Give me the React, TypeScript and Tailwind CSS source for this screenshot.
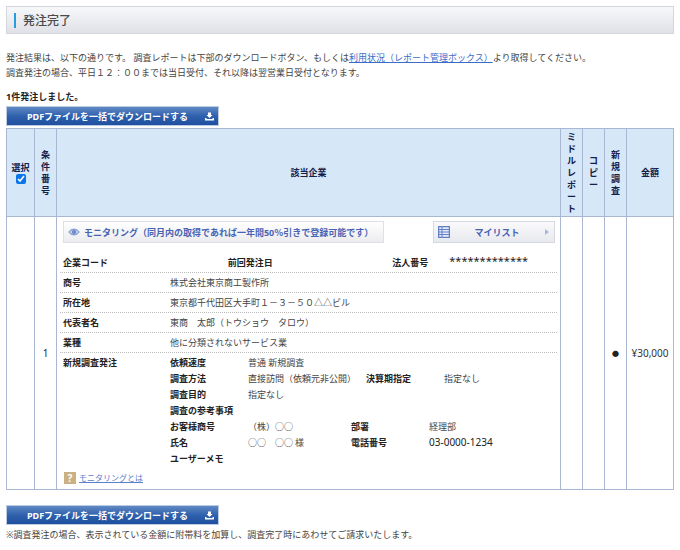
import type { ReactNode } from "react";

const companyRows = [
  { label: "商号", value: "株式会社東京商工製作所" },
  { label: "所在地", value: "東京都千代田区大手町１－３－５０△△ビル" },
  { label: "代表者名", value: "東商　太郎（トウショウ　タロウ）" },
  { label: "業種", value: "他に分類されないサービス業" },
];

function DownloadButton() {
  return (
    <button
      type="button"
      className="flex h-5 w-[213px] items-center justify-between border border-[#bccbe4] bg-linear-to-b from-[#6089c4] via-[#2f61ad] to-[#1f4f9f] pr-1 pl-5 text-[9px] leading-none font-bold text-white"
    >
      <span>PDFファイルを一括でダウンロードする</span>
      <svg width="9" height="9" viewBox="0 0 9 9" fill="currentColor" aria-hidden="true">
        <path d="M3 0.500h3v2.500h1.500L4.500 6 1.500 3H3zM0 6h1.500v1h6V6H9v2.500H0z" />
      </svg>
    </button>
  );
}

function VerticalHead({ text, width }: { text: string; width: string }) {
  return (
    <th className={`${width} border border-[#a9b7d3] p-0`}>
      <div className="mx-auto w-[9px] text-center leading-3">
        {text.split("").map((c, i) => (
          <span key={i} className="block">
            {c}
          </span>
        ))}
      </div>
    </th>
  );
}

function Detail({ label, children }: { label: string; children?: ReactNode }) {
  return (
    <div className="flex">
      <dt className="w-[78px] shrink-0 font-bold whitespace-nowrap text-[#222]">{label}</dt>
      <dd className="flex grow">{children}</dd>
    </div>
  );
}

export default function App() {
  return (
    <main className="px-1.5 py-1.5 font-['Noto_Sans','Noto_Sans_CJK_JP',sans-serif] text-[9px] leading-[15px] text-[#444]">
      <header className="flex h-7 items-center border border-[#d3d6df] bg-linear-to-b from-[#f7f8fa] to-[#dfe1e7] pl-[7px]">
        <span className="h-[15px] w-0.5 bg-[#2a9be0]" />
        <h1 className="pl-[7px] text-[12px] font-medium text-[#4a4a4a]">発注完了</h1>
      </header>

      <p className="mt-4">
        発注結果は、以下の通りです。 調査レポートは下部のダウンロードボタン、もしくは
        <a href="#box" className="text-[#3a6cc8] underline">
          利用状況（レポート管理ボックス）
        </a>
        より取得してください。
        <br />
        調査発注の場合、平日１２：００までは当日受付、それ以降は翌営業日受付となります。
      </p>

      <p className="mt-[9px] mb-0.5 font-bold text-[#222]">1件発注しました。</p>
      <DownloadButton />

      <table className="mt-0.5 w-full table-fixed border-collapse border border-[#a9b7d3]">
        <thead>
          <tr className="h-[88px] bg-[#d6e7f8] text-[#14204a]">
            <th className="w-7 border border-[#a9b7d3] p-0">
              <label className="flex flex-col items-center leading-3">
                選択
                <input type="checkbox" defaultChecked className="size-2.5 accent-[#0a75e8]" />
              </label>
            </th>
            <VerticalHead text="条件番号" width="w-[22px]" />
            <th className="border border-[#a9b7d3] p-0">該当企業</th>
            <VerticalHead text="ミドルレポート" width="w-[22px]" />
            <VerticalHead text="コピー" width="w-[22px]" />
            <VerticalHead text="新規調査" width="w-[22px]" />
            <th className="w-[47px] border border-[#a9b7d3] p-0">金額</th>
          </tr>
        </thead>
        <tbody>
          <tr className="text-center">
            <td className="border border-[#a9b7d3]" />
            <td className="border border-[#a9b7d3] text-[10px] text-[#222]">1</td>
            <td className="border border-[#a9b7d3] px-[3px] pt-1 pb-1 text-left">
              <div className="flex items-start justify-between pr-0.5 pl-[3px]">
                <button
                  type="button"
                  className="flex h-[22px] w-[321px] items-center gap-1 border border-[#e0e0e4] bg-linear-to-b from-white to-[#ececef] px-1 font-bold text-[#4763b4]"
                >
                  <svg width="12" height="10" viewBox="0 0 12 10" fill="#c3d0ec" stroke="#6f8bc8" aria-hidden="true">
                    <path d="M.8 5C3 1.200 9 1.200 11.200 5 9 8.800 3 8.800.8 5z" />
                    <circle cx="6" cy="5" r="1.800" fill="#6f8bc8" />
                  </svg>
                  モニタリング（同月内の取得であれば一年間50％引きで登録可能です）
                </button>
                <button
                  type="button"
                  className="flex h-[22px] w-[122px] items-center justify-between border border-[#d6d9e2] bg-linear-to-b from-[#fafafc] to-[#e8e9ee] px-1 font-bold text-[#4763b4]"
                >
                  <svg width="12" height="12" viewBox="0 0 12 12" fill="#e4eaf7" stroke="#6480c4" aria-hidden="true">
                    <path d="M.5.5h11v11H.5z" strokeWidth="1.500" />
                    <path d="M4 1v10M1 3.500h10M1 6h10M1 8.500h10" />
                  </svg>
                  マイリスト
                  <svg width="6" height="8" viewBox="0 0 6 8" fill="#a9b7dc" aria-hidden="true">
                    <path d="M1 1l4 3-4 3z" />
                  </svg>
                </button>
              </div>

              <dl className="mt-3">
                <div className="flex border-b border-dotted border-[#bbb] pb-0.5 pl-[3px] font-bold text-[#222]">
                  <dt className="w-1/3">企業コード</dt>
                  <dt className="w-1/3">前回発注日</dt>
                  <dt className="w-[57px]">法人番号</dt>
                  <dd className="text-[11px] leading-3 font-normal">*************</dd>
                </div>
                {companyRows.map((row) => (
                  <div key={row.label} className="flex border-b border-dotted border-[#bbb] py-0.5 pl-[3px]">
                    <dt className="w-[107px] shrink-0 font-bold text-[#222]">{row.label}</dt>
                    <dd>{row.value}</dd>
                  </div>
                ))}
                <div className="flex pt-0.5 pl-[3px]">
                  <dt className="w-[107px] shrink-0 font-bold text-[#222]">新規調査発注</dt>
                  <dd className="grow">
                    <dl className="flex flex-col gap-px">
                      <Detail label="依頼速度">普通 新規調査</Detail>
                      <Detail label="調査方法">
                        <span className="w-[118px]">直接訪問（依頼元非公開）</span>
                        <b className="w-[78px] text-[#222]">決算期指定</b>
                        <span>指定なし</span>
                      </Detail>
                      <Detail label="調査目的">指定なし</Detail>
                      <Detail label="調査の参考事項" />
                      <Detail label="お客様商号">
                        <span className="w-[103px] font-['Noto_Sans_CJK_JP',sans-serif]">（株）○○</span>
                        <b className="w-[78px] text-[#222]">部署</b>
                        <span>経理部</span>
                      </Detail>
                      <Detail label="氏名">
                        <span className="w-[103px] font-['Noto_Sans_CJK_JP',sans-serif]">○○　○○ 様</span>
                        <b className="w-[78px] text-[#222]">電話番号</b>
                        <span className="text-[10px] text-[#222]">03-0000-1234</span>
                      </Detail>
                      <Detail label="ユーザーメモ" />
                    </dl>
                  </dd>
                </div>
              </dl>

              <div className="mt-1 flex items-center gap-[3px] pl-1">
                <span className="flex size-3 items-center justify-center bg-[#c9b184] text-[10px] leading-none font-bold text-white">
                  ?
                </span>
                <a href="#about" className="text-[8px] text-[#5b80cc] underline">
                  モニタリングとは
                </a>
              </div>
            </td>
            <td className="border border-[#a9b7d3]" />
            <td className="border border-[#a9b7d3]" />
            <td className="border border-[#a9b7d3] text-[7px] text-[#222]">●</td>
            <td className="border border-[#a9b7d3] text-[10px] text-[#333]">¥30,000</td>
          </tr>
        </tbody>
      </table>

      <div className="mt-[15px]">
        <DownloadButton />
        <p className="mt-0.5">※調査発注の場合、表示されている金額に附帯料を加算し、調査完了時にあわせてご請求いたします。</p>
      </div>
    </main>
  );
}
